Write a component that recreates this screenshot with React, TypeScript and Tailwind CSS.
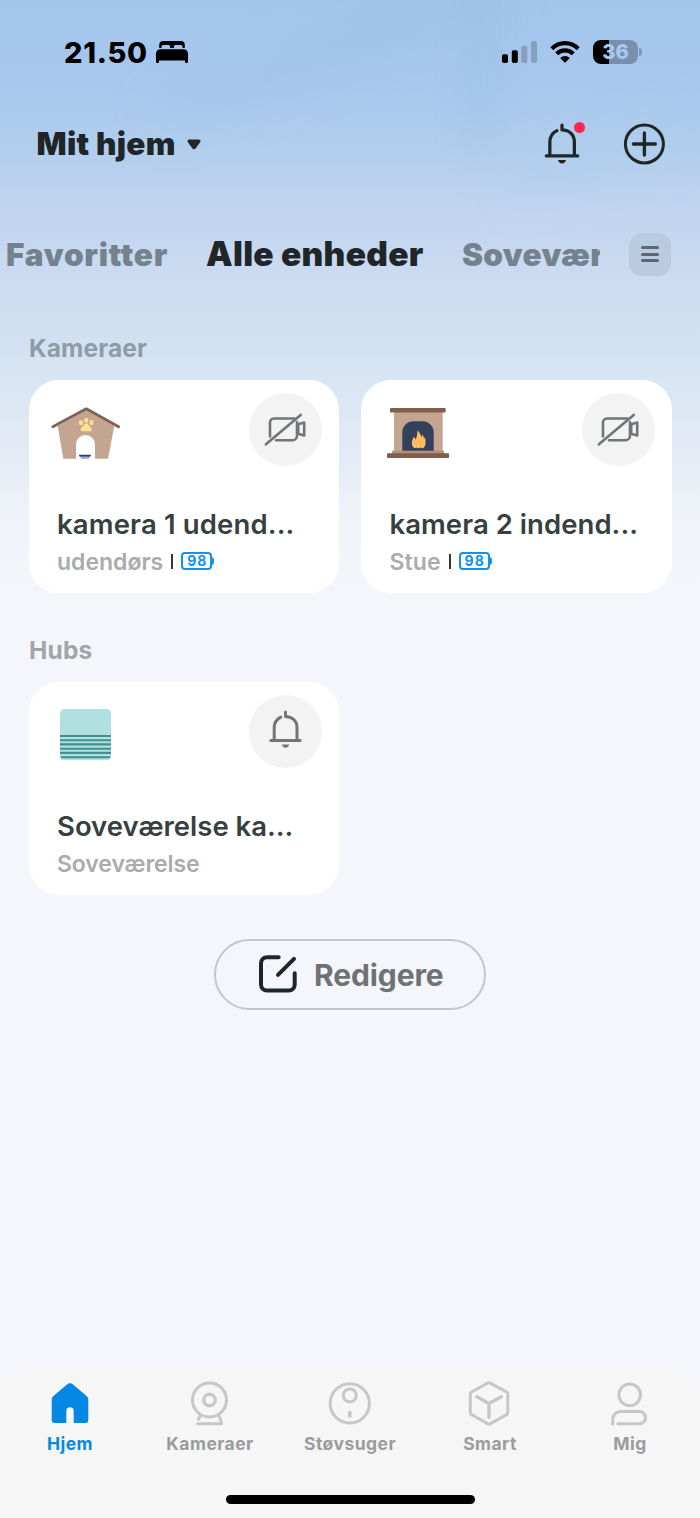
import React from "react";

type IconProps = { className?: string };

/* ── status bar icons ── */
const BedIcon = () => (
    <svg width="32" height="22" viewBox="0 0 32 22" fill="#000">
        <path d="M3.2 7V4a4 4 0 0 1 4-4h17.6a4 4 0 0 1 4 4v3h-2.3V5.8a1.8 1.8 0 0 0-1.8-1.8h-5a1.8 1.8 0 0 0-1.8 1.8V7h-3.8V5.8A1.8 1.8 0 0 0 12.3 4h-5a1.8 1.8 0 0 0-1.8 1.8V7z" />
        <path d="M0 21V12.5a4.3 4.3 0 0 1 4.3-4.3h23.4a4.3 4.3 0 0 1 4.3 4.3V21a1 1 0 0 1-1 1h-1a1 1 0 0 1-1-1v-1.5H3V21a1 1 0 0 1-1 1H1a1 1 0 0 1-1-1z" />
    </svg>
);

const SignalIcon = () => (
    <svg width="35" height="22" viewBox="0 0 35 22">
        <rect x="0" y="13.3" width="6" height="8.7" rx="1.8" fill="#000" />
        <rect x="9.8" y="9.3" width="6" height="12.7" rx="1.8" fill="#000" />
        <rect x="19.3" y="4.8" width="6" height="17.2" rx="1.8" fill="#859fbd" />
        <rect x="29" y="0" width="6" height="22" rx="1.8" fill="#859fbd" />
    </svg>
);

const WifiIcon = () => (
    <svg width="30" height="22" viewBox="0 0 30 22">
        <path d="M1.8 7.7a18.6 18.6 0 0 1 26.4 0" fill="none" stroke="#000" strokeWidth="4.2" />
        <path d="M6.7 12.8a11.7 11.7 0 0 1 16.6 0" fill="none" stroke="#000" strokeWidth="4.2" />
        <path d="M10.2 17a7 7 0 0 1 9.6 0L15.7 21.3a1 1 0 0 1-1.4 0z" fill="#000" />
    </svg>
);

/* ── shared icons ── */
const BellIcon = ({ className }: IconProps) => (
    <svg className={className} viewBox="0 0 33 40" fill="none" stroke="currentColor" strokeWidth="3" strokeLinecap="round" strokeLinejoin="round">
        <path d="M5.2 30V17.6c0-4.6 2.5-8.4 6.6-10.5" />
        <path d="M16.5 2v4.4c6.7 0 11.5 4.6 11.5 11v12.600" />
        <path d="M1.9 30.6h29.2" />
        <path d="M12.8 34.5h7.4c-.5 2-1.8 3.200-3.700 3.200s-3.200-1.200-3.700-3.200z" fill="currentColor" stroke="none" />
    </svg>
);

const CameraOffIcon = () => (
    <svg className="h-[73px] w-[73px]" viewBox="0 0 73 73" fill="none" stroke="#707576" strokeWidth="2.6" strokeLinecap="round" strokeLinejoin="round">
        <path d="M21 43.5V29.5a4 4 0 0 1 4-4h20.5" />
        <path d="M48 29v13.7a4.5 4.5 0 0 1-4.500 4.500H27" />
        <path d="M49.2 31.200l6-1.700v13l-6-1.700z" />
        <path d="M16.9 51.3L51.7 21.9" />
    </svg>
);

const PlusCircleIcon = () => (
    <svg width="42" height="42" viewBox="0 0 42 42" fill="none" stroke="#1f2629" strokeWidth="3" strokeLinecap="round">
        <circle cx="21.4" cy="21" r="19" />
        <path d="M10.4 21h22M21.4 10v22" strokeWidth="3.3" />
    </svg>
);

const EditIcon = () => (
    <svg width="40" height="40" viewBox="0 0 40 40" fill="none" stroke="#1f2629" strokeWidth="4" strokeLinecap="round">
        <path d="M20.7 3.2H9a6 6 0 0 0-6 6V30.5a6 6 0 0 0 6 6h21.7a6 6 0 0 0 6-6V19.2" />
        <path d="M20 20.8L36 4.9" />
    </svg>
);

/* ── device pictures ── */
const DogHouse = () => (
    <svg width="70" height="52" viewBox="0 0 70 52">
        <path d="M6.7 19L35.3 3l28 16-6.3 32.7H44V37.500a9.500 9.500 0 0 0-19 0v14.200H12.300z" fill="#c3a592" />
        <path d="M1.9 19.8L35.3 1.8l32.300 18" fill="none" stroke="#7f6250" strokeWidth="2.8" strokeLinecap="round" strokeLinejoin="round" />
        <g fill="#ffdf94">
            <rect x="28" y="13.3" width="3.8" height="4.6" rx="1.2" />
            <rect x="33.3" y="11" width="3.9" height="4.6" rx="1.2" />
            <rect x="38.6" y="13.3" width="3.8" height="4.6" rx="1.2" />
            <path d="M35.2 16.2c1.5 0 2 1 2.600 2.100 1 1.700 3 2.300 3 4.300 0 1.500-1.200 1.700-2.600 1.700h-6c-1.500 0-2.600-.3-2.600-1.800 0-2 2-2.600 3-4.300.6-1.100 1.100-2 2.600-2z" />
        </g>
        <path d="M28.6 48.500h10.700l-1.500 3.200h-7.700z" fill="#91a9d6" />
        <rect x="28" y="47.7" width="12" height="1.8" rx=".8" fill="#2f3f5c" />
    </svg>
);

const Fireplace = () => (
    <svg width="62" height="52" viewBox="0 0 62 52">
        <rect x="7" y="4" width="48.7" height="40" fill="#c3a592" />
        <rect x="5" y="43.7" width="52" height="3.5" fill="#b5917b" />
        <rect x="3" y="1" width="55.7" height="4.5" rx="1" fill="#7f5f4b" />
        <rect x="0" y="46.3" width="62" height="4.7" rx=".8" fill="#7f5f4b" />
        <path d="M15.3 43.7V25.500c0-6.500 5-11.200 11.500-11.200h8.400c6.500 0 11.500 4.700 11.500 11.200v18.200z" fill="#33425a" />
        <path d="M27.5 41c-1.800-.7-2.800-3.300-2.600-5.600.2-2.400 1.400-3.300 1.700-5.600 1 .6 1.700 1.700 1.900 3 1.600-2.800 2-5.800 1.800-9.200 2 1.500 3.700 4.200 4.200 6.600.5-.7.800-1.500.9-2.600 1.300 1.300 1.200 2.600 1.600 4.100.4-.3.700-.8.900-1.400 1 3.700 1.300 8.700-1.500 10.600-1 .6-2 .4-2.600-.4-1.500 1-3.400.9-4.500 0-.5.500-1.100.7-1.800.5z" fill="#ffbd5c" />
    </svg>
);

const HubPicture = () => (
    <svg width="51" height="52" viewBox="0 0 51 52">
        <rect width="51" height="51.3" rx="4.5" fill="#b0e1e0" />
        <path d="M0 27h51M0 31.200h51M0 35.400h51M0 39.700h51M0 43.900h51M.8 48.200h49.400" stroke="#438f90" strokeWidth="2.1" />
    </svg>
);

/* ── bottom navigation icons ── */
const HomeTabIcon = () => (
    <svg width="44" height="48" viewBox="0 0 44 48" fill="#0588e4">
        <path d="M18.7 4.8a5 5 0 0 1 6.600 0l13 10.900a5 5 0 0 1 2 4V40a3 3 0 0 1-3 3H25.700V30.900a3.700 3.700 0 0 0-7.400 0V43H6.700a3 3 0 0 1-3-3V19.700a5 5 0 0 1 2-4z" />
    </svg>
);

const CameraTabIcon = () => (
    <svg width="44" height="48" viewBox="0 0 44 48" fill="none" stroke="#c5c7c8" strokeWidth="3" strokeLinecap="round" strokeLinejoin="round">
        <circle cx="21.5" cy="20" r="17" />
        <circle cx="21.5" cy="20" r="5.7" strokeWidth="3.4" />
        <path d="M12.3 36l-2 3.500M30.800 36c1.600 2.400 2.500 4.800 2.700 7.700H9.500" />
    </svg>
);

const VacuumTabIcon = () => (
    <svg width="44" height="48" viewBox="0 0 44 48" fill="none" stroke="#c5c7c8" strokeWidth="3" strokeLinecap="round">
        <circle cx="21.8" cy="23.4" r="19.6" />
        <circle cx="21.8" cy="15.4" r="6.5" />
        <path d="M21.8 32.500v3.600" strokeWidth="3.6" />
    </svg>
);

const SmartTabIcon = () => (
    <svg width="44" height="48" viewBox="0 0 44 48" fill="none" stroke="#c5c7c8" strokeWidth="3" strokeLinecap="round" strokeLinejoin="round">
        <path d="M20 2.9a2.200 2.200 0 0 1 2 0l16.600 9.100a2.400 2.400 0 0 1 1.200 2V32.600a2.400 2.400 0 0 1-1.200 2L22 43.900a2.200 2.200 0 0 1-2 0L3.500 34.600a2.400 2.400 0 0 1-1.200-2V14a2.400 2.400 0 0 1 1.200-2z" />
        <path d="M8.7 16.8l12.300 6.700 12.300-6.700M21 23.500v13.800" strokeWidth="3.4" />
    </svg>
);

const ProfileTabIcon = () => (
    <svg width="44" height="48" viewBox="0 0 44 48" fill="none" stroke="#c5c7c8" strokeWidth="3" strokeLinecap="round">
        <circle cx="21.7" cy="14.8" r="10.8" />
        <path d="M4.7 44v-4.700a7.700 7.700 0 0 1 7.700-7.700h19a6.100 6.100 0 0 1 6.100 6.100v0a6.100 6.100 0 0 1-6.100 6.100H9.800" />
    </svg>
);

const Battery = ({ level }: { level: number }) => (
    <span className="-mt-px flex items-center">
        <span className="flex h-[18px] w-[31px] items-center justify-center rounded-[4px] border-2 border-[#1491ea] pl-px text-[14px] leading-none font-bold tracking-[1px] text-[#1491ea]">
            {level}
        </span>
        <span className="-ml-px h-[8px] w-[3px] rounded-r-sm bg-[#1491ea]" />
    </span>
);

type Device = {
    name: string;
    room: string;
    battery?: number;
    picture: React.ReactNode;
    pictureClass: string;
    nameClass: string;
    roomClass: string;
    action: React.ReactNode;
};

const cameras: Device[] = [
    { name: "kamera 1 udend...", room: "udendørs", battery: 98, picture: <DogHouse />, pictureClass: "ml-[22.5px]", nameClass: "tracking-[0.15px]", roomClass: "tracking-[0px]", action: <CameraOffIcon /> },
    { name: "kamera 2 indend...", room: "Stue", battery: 98, picture: <Fireplace />, pictureClass: "ml-[26px]", nameClass: "tracking-[0.05px]", roomClass: "tracking-[0.1px]", action: <CameraOffIcon /> },
];

const hubs: Device[] = [
    { name: "Soveværelse ka...", room: "Soveværelse", picture: <HubPicture />, pictureClass: "ml-[31.5px]", nameClass: "tracking-[0px]", roomClass: "tracking-[-0.1px]", action: <BellIcon className="-mt-[3px] h-[40px] w-[33px] text-[#707576]" /> },
];

const DeviceCard = ({ device }: { device: Device }) => (
    <div className="flex h-[213px] flex-col rounded-[30px] bg-white">
        <div className="flex h-[116px] items-start justify-between pr-[17px] pt-[13px]">
            <div className={`mt-[14px] ${device.pictureClass}`}>{device.picture}</div>
            <button className="flex h-[73px] w-[73px] items-center justify-center rounded-full bg-[#f3f3f3]">{device.action}</button>
        </div>
        <div className="pl-[28.5px]">
            <h3 className={`mt-[9px] h-[38px] whitespace-nowrap text-[27.5px] leading-[38px] font-semibold text-[#373f43] ${device.nameClass}`}>{device.name}</h3>
            <div className="mt-[4px] flex h-[30px] items-center">
                <span className={`text-[23px] leading-[30px] font-semibold text-[#a9acad] ${device.roomClass}`}>{device.room}</span>
                {device.battery && (
                    <>
                        <span className="ml-[8px] mr-[8px] h-[15px] w-[2px] bg-[#30383b]" />
                        <Battery level={device.battery} />
                    </>
                )}
            </div>
        </div>
    </div>
);

const tabs = [
    { label: "Hjem", icon: <HomeTabIcon />, active: true },
    { label: "Kameraer", icon: <CameraTabIcon /> },
    { label: "Støvsuger", icon: <VacuumTabIcon /> },
    { label: "Smart", icon: <SmartTabIcon /> },
    { label: "Mig", icon: <ProfileTabIcon /> },
];

export default function App() {
    return (
        <div className="relative flex h-[1518px] w-[700px] flex-col overflow-hidden bg-[#f4f6fb] bg-[linear-gradient(180deg,#a3c5eb_0px,#a8c8ed_90px,#b0cdec_140px,#b9d1ee_180px,#c0d4ef_205px,#ccdcf1_285px,#d1e1f2_340px,#dce7f4_400px,#e4ebf5_455px,#eff3f8_515px,#f4f6fb_600px)] font-['Inter',sans-serif]">
            {/* soft light streaks in the sky */}
            <div className="pointer-events-none absolute inset-x-0 top-0 h-[300px] overflow-hidden">
                <div className="absolute left-[150px] top-[42px] h-[24px] w-[360px] -rotate-[20deg] rounded-full bg-[#8db3e2]/30 blur-xl" />
                <div className="absolute left-[470px] top-[-20px] h-[170px] w-[22px] rounded-full bg-[#8db3e2]/25 blur-lg" />
                <div className="absolute left-[500px] top-[140px] h-[20px] w-[260px] -rotate-[14deg] rounded-full bg-[#9fc2ea]/30 blur-xl" />
            </div>

            {/* status bar */}
            <div className="relative flex h-[104px] items-center justify-between pl-[64px] pr-[58px]">
                <div className="flex items-center">
                    <span className="text-[29px] leading-none font-extrabold tracking-[0.7px] text-black">21.50</span>
                    <span className="ml-[8px]"><BedIcon /></span>
                </div>
                <div className="flex items-center">
                    <SignalIcon />
                    <span className="ml-[13px]"><WifiIcon /></span>
                    <div className="ml-[13px] flex h-[24px] w-[45px] items-center justify-center rounded-[8px] bg-[linear-gradient(90deg,#000_16.3px,#7890ae_16.3px)] text-[20px] leading-none font-extrabold text-[#a9c8ee]">
                        36
                    </div>
                    <span className="ml-px h-[8px] w-[3px] rounded-r-full bg-[#7f99b9]" />
                </div>
            </div>

            {/* home selector */}
            <header className="relative flex h-[80px] items-center justify-between pl-[36.5px] pr-[35px]">
                <button className="flex items-center">
                    <span className="text-[31.5px] leading-none font-black tracking-[0.3px] text-[#1f2629]">Mit hjem</span>
                    <svg className="ml-[11px]" width="14" height="11" viewBox="0 0 14 11">
                        <path d="M2.2.5h9.600c1.500 0 2.300 1.500 1.300 2.700L8.600 9.400c-.8 1.100-2.400 1.100-3.200 0L.9 3.200C-.1 2 .7.500 2.200.500z" fill="#1f2629" />
                    </svg>
                </button>
                <div className="flex items-center gap-[43px]">
                    <div className="relative">
                        <BellIcon className="h-[43px] w-[36px] text-[#1f2629]" />
                        <span className="absolute right-[-5px] top-[-1px] h-[11px] w-[11px] rounded-full bg-[#ff2850]" />
                    </div>
                    <PlusCircleIcon />
                </div>
            </header>

            {/* room tabs */}
            <nav className="relative mt-[39px] flex h-[62px] items-center pl-[6px]">
                <div className="flex w-[594px] items-center overflow-hidden whitespace-nowrap leading-[44px] font-black">
                    <span className="mt-[2px] w-[200px] shrink-0 text-[31.5px] tracking-[0.75px] text-[#74828f]">Favoritter</span>
                    <span className="w-[256px] shrink-0 text-[33.5px] tracking-[0.3px] text-[#1f2629]">Alle enheder</span>
                    <span className="mt-[2px] shrink-0 text-[31.5px] tracking-[0.35px] text-[#74828f]">Soveværelse</span>
                </div>
                <button className="ml-[29px] flex h-[43px] w-[42px] flex-col items-center justify-center gap-[3.5px] rounded-[13px] bg-[#b9cbe0]">
                    <span className="h-[3px] w-[18px] rounded-full bg-[#5b6771]" />
                    <span className="h-[3px] w-[18px] rounded-full bg-[#5b6771]" />
                    <span className="h-[3px] w-[18px] rounded-full bg-[#5b6771]" />
                </button>
            </nav>

            {/* devices */}
            <main className="relative px-[28.5px]">
                <h2 className="mt-[45px] h-[36px] pl-[0.5px] text-[24.5px] leading-[36px] font-bold tracking-[0.1px] text-[#8e9ba8]">Kameraer</h2>
                <div className="mt-[13.5px] grid grid-cols-2 gap-[22px]">
                    {cameras.map(d => <DeviceCard key={d.name} device={d} />)}
                </div>

                <h2 className="mt-[39.5px] h-[36px] pl-[0.5px] text-[24.5px] leading-[36px] font-bold tracking-[0.2px] text-[#a1a5a9]">Hubs</h2>
                <div className="mt-[14px] grid grid-cols-2 gap-[22px]">
                    {hubs.map(d => <DeviceCard key={d.name} device={d} />)}
                </div>

                <button className="mx-auto mt-[43.5px] flex h-[71px] w-[272px] items-center rounded-full border-2 border-[#c3c5c9] pl-[42px]">
                    <EditIcon />
                    <span className="ml-[16px] mt-px text-[30px] leading-none font-bold tracking-[-0.1px] text-[#6d7375]">Redigere</span>
                </button>
            </main>

            {/* bottom navigation */}
            <footer className="relative mt-auto flex h-[148px] flex-col rounded-t-[28px] bg-[#f6f6f6]">
                <div className="grid grid-cols-5 pt-[10px]">
                    {tabs.map(t => (
                        <div key={t.label} className="flex flex-col items-center">
                            {t.icon}
                            <span className={`mt-[4px] text-[17.5px] leading-[24px] font-bold tracking-[0.45px] ${t.active ? "text-[#0588e4]" : "text-[#9a9c9d]"}`}>{t.label}</span>
                        </div>
                    ))}
                </div>
                <div className="mx-auto mb-[14px] mt-auto h-[9px] w-[249px] rounded-full bg-black" />
            </footer>
        </div>
    );
}
